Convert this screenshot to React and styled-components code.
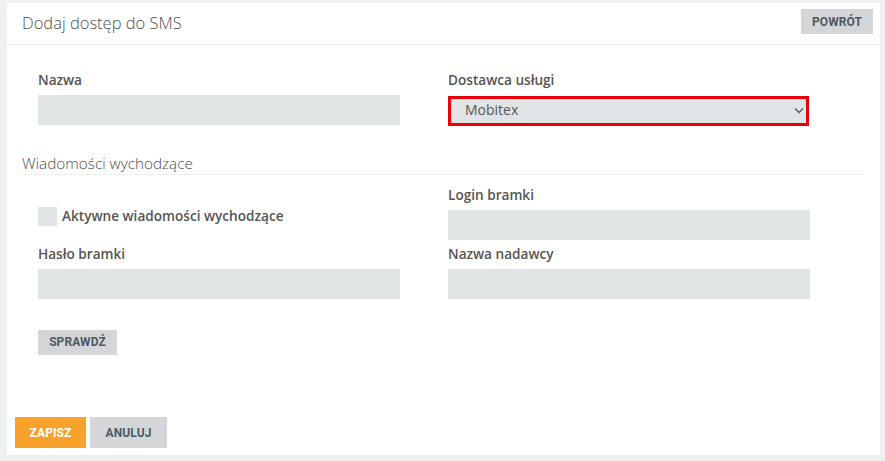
import React from "react";
import styled, { createGlobalStyle } from "styled-components";

const Global = createGlobalStyle`
  html, body {
    margin: 0;
    padding: 0;
    background: #eef0ef;
  }
  body {
    font-family: "Open Sans", "Noto Sans", sans-serif;
    color: #555;
  }
  * { box-sizing: border-box; }
`;

const Panel = styled.div`
  margin: 3px 5px 0 7px;
  width: 873px;
  height: 452px;
  background: #fff;
  display: flex;
  flex-direction: column;
`;

const Header = styled.div`
  height: 42px;
  display: flex;
  align-items: flex-start;
  justify-content: space-between;
  padding: 6px 7px 0 15px;
  border-bottom: 1px solid #eef0ef;
`;

const Title = styled.h1`
  margin: 0;
  padding-top: 3px;
  font-size: 16.5px;
  line-height: 22px;
  font-weight: 300;
  color: #4f4f4f;
`;

const Button = styled.button`
  border: none;
  border-radius: 0;
  padding: 0;
  width: ${(p) => p.$w}px;
  height: ${(p) => p.$h || 25}px;
  background: ${(p) => (p.$primary ? "#f8a12b" : "#d5d6d7")};
  color: ${(p) => (p.$primary ? "#fff" : "#4b5a64")};
  font-family: Roboto, "Liberation Sans", sans-serif;
  font-weight: 700;
  font-size: 12px;
  letter-spacing: 0.1px;
  text-transform: uppercase;
  cursor: pointer;
`;

const Body = styled.div`
  padding: 25px 16px 0 15px;
`;

const Grid = styled.div`
  display: grid;
  grid-template-columns: 362px 362px;
  column-gap: 48px;
  row-gap: ${(p) => p.$rowGap || 0}px;
  padding-left: 16px;
`;

const Field = styled.div`
  display: flex;
  flex-direction: column;
`;

const Label = styled.label`
  font-size: 13.6px;
  line-height: 20px;
  font-weight: 600;
  color: #555;
  margin-bottom: 5px;
`;

const Input = styled.input`
  width: 362px;
  height: 30px;
  border: none;
  border-radius: 0;
  background: #e1e4e5;
  padding: 0 12px;
  font: inherit;
  outline: none;
`;

const SelectWrap = styled.div`
  position: relative;
  width: 361px;
  height: 30px;
  margin-top: 1px;
`;

const Select = styled.select`
  appearance: none;
  width: 100%;
  height: 100%;
  border: 3px solid #e8000b;
  border-radius: 0;
  background: #e1e4e5;
  padding: 0 14px 4px;
  font-family: "Open Sans", sans-serif;
  font-size: 14px;
  color: #555;
  outline: none;
`;

const Chevron = styled.svg`
  position: absolute;
  right: 5px;
  top: 11px;
  pointer-events: none;
`;

const Section = styled.h2`
  margin: 27px 0 10px;
  padding-bottom: 1px;
  border-bottom: 1px solid #eef0ef;
  font-size: 15.3px;
  line-height: 20px;
  font-weight: 300;
  color: #4f4f4f;
`;

const CheckRow = styled.label`
  display: flex;
  align-items: center;
  gap: 5px;
  font-size: 13.6px;
  line-height: 20px;
  font-weight: 600;
  color: #555;
  align-self: center;
  margin-top: 7px;
`;

const Box = styled.span`
  width: 19px;
  height: 19px;
  background: #e1e4e5;
  flex-shrink: 0;
`;

const CheckWrap = styled.div`
  padding-left: 16px;
  margin-top: 30px;
`;

const Footer = styled.div`
  margin-top: auto;
  display: flex;
  gap: 4px;
  padding: 0 0 7px 8px;
`;

export default function App() {
  return (
    <>
      <Global />
      <Panel>
        <Header>
          <Title>Dodaj dostęp do SMS</Title>
          <Button $w={72}>Powrót</Button>
        </Header>
        <Body>
          <Grid>
            <Field>
              <Label>Nazwa</Label>
              <Input />
            </Field>
            <Field>
              <Label>Dostawca usługi</Label>
              <SelectWrap>
                <Select defaultValue="mobitex">
                  <option value="mobitex">Mobitex</option>
                </Select>
                <Chevron width="10" height="7" viewBox="0 0 10 7">
                  <path d="M1 1.5 L5 5.5 L9 1.5" fill="none" stroke="#555" strokeWidth="1.3" />
                </Chevron>
              </SelectWrap>
            </Field>
          </Grid>
          <Section>Wiadomości wychodzące</Section>
          <Grid $rowGap={4}>
            <CheckRow>
              <Box />
              Aktywne wiadomości wychodzące
            </CheckRow>
            <Field>
              <Label>Login bramki</Label>
              <Input />
            </Field>
            <Field>
              <Label>Hasło bramki</Label>
              <Input type="password" />
            </Field>
            <Field>
              <Label>Nazwa nadawcy</Label>
              <Input />
            </Field>
          </Grid>
          <CheckWrap>
            <Button $w={79}>Sprawdź</Button>
          </CheckWrap>
        </Body>
        <Footer>
          <Button $w={71} $h={31} $primary>Zapisz</Button>
          <Button $w={77} $h={31}>Anuluj</Button>
        </Footer>
      </Panel>
    </>
  );
}
